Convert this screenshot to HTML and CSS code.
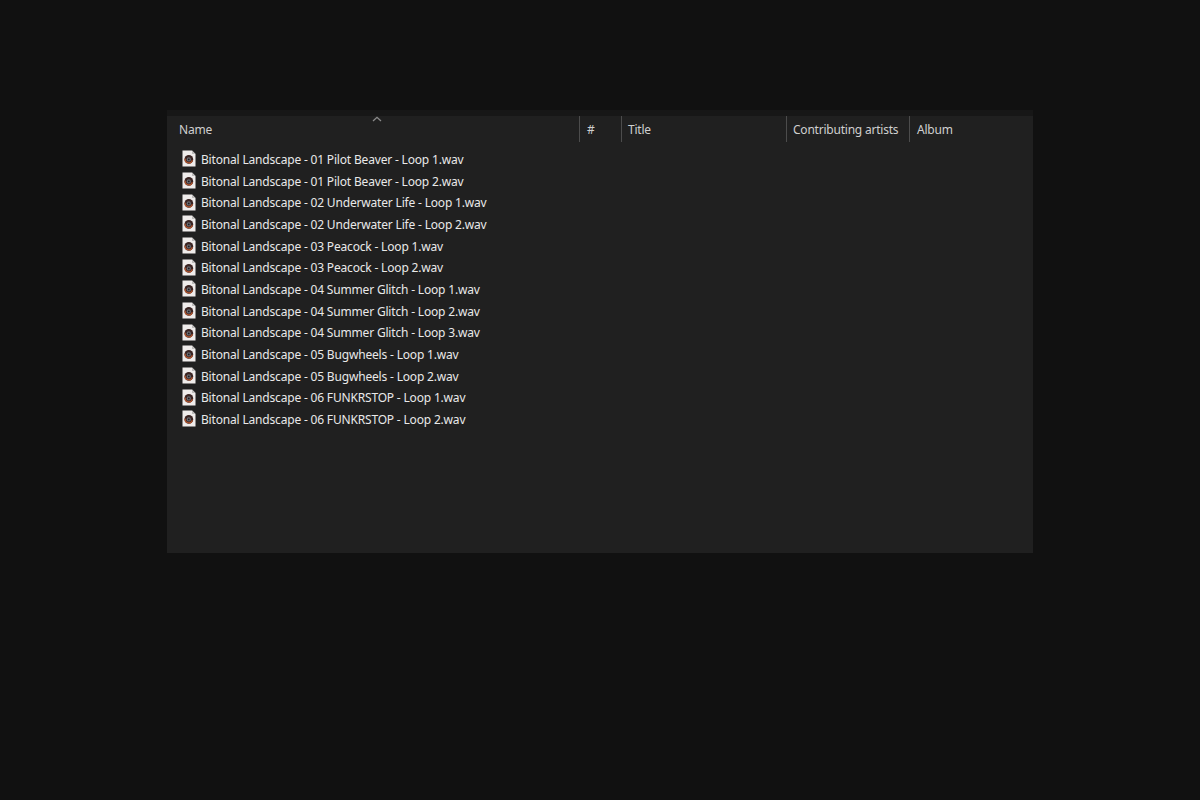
FILE: index.html
```html
<!DOCTYPE html>
<html lang="en">
<head>
<meta charset="utf-8">
<title>Bitonal Landscape</title>
<link rel="stylesheet" href="styles.css">
</head>
<body>
<svg class="defs" width="0" height="0" aria-hidden="true">
  <symbol id="wav" viewBox="0 0 14 17">
    <path d="M0.5 0.5H10L13.5 4V16.5H0.5Z" fill="#efeceb"/>
    <path d="M10 0.5V4H13.5" fill="#bdbbba"/>
    <circle cx="6.8" cy="9.4" r="4.4" fill="#3a2422"/>
    <path d="M3.2 8.6A3.7 3.7 0 0 0 10.4 10.2" fill="none" stroke="#b3562f" stroke-width="1.2"/>
    <circle cx="6.8" cy="9.4" r="2.2" fill="#6a6a70"/>
    <circle cx="6.8" cy="9.4" r="0.9" fill="#1d1d20"/>
  </symbol>
</svg>
<main class="window">
  <div class="strip"></div>
  <header class="head">
    <div class="col col-name"><span class="label">Name</span><svg class="sort" viewBox="0 0 10 6"><path d="M1 5L5 1.3L9 5" fill="none" stroke="#8b8b8b" stroke-width="1.3"/></svg></div>
    <div class="col col-num"><span class="label">#</span></div>
    <div class="col col-title"><span class="label">Title</span></div>
    <div class="col col-artist"><span class="label">Contributing artists</span></div>
    <div class="col col-album"><span class="label">Album</span></div>
  </header>
  <ul class="files">
    <li class="file"><svg class="icon"><use href="#wav"/></svg><span class="name">Bitonal Landscape - 01 Pilot Beaver - Loop 1.wav</span></li>
    <li class="file"><svg class="icon"><use href="#wav"/></svg><span class="name">Bitonal Landscape - 01 Pilot Beaver - Loop 2.wav</span></li>
    <li class="file"><svg class="icon"><use href="#wav"/></svg><span class="name">Bitonal Landscape - 02 Underwater Life - Loop 1.wav</span></li>
    <li class="file"><svg class="icon"><use href="#wav"/></svg><span class="name">Bitonal Landscape - 02 Underwater Life - Loop 2.wav</span></li>
    <li class="file"><svg class="icon"><use href="#wav"/></svg><span class="name">Bitonal Landscape - 03 Peacock - Loop 1.wav</span></li>
    <li class="file"><svg class="icon"><use href="#wav"/></svg><span class="name">Bitonal Landscape - 03 Peacock - Loop 2.wav</span></li>
    <li class="file"><svg class="icon"><use href="#wav"/></svg><span class="name">Bitonal Landscape - 04 Summer Glitch - Loop 1.wav</span></li>
    <li class="file"><svg class="icon"><use href="#wav"/></svg><span class="name">Bitonal Landscape - 04 Summer Glitch - Loop 2.wav</span></li>
    <li class="file"><svg class="icon"><use href="#wav"/></svg><span class="name">Bitonal Landscape - 04 Summer Glitch - Loop 3.wav</span></li>
    <li class="file"><svg class="icon"><use href="#wav"/></svg><span class="name">Bitonal Landscape - 05 Bugwheels - Loop 1.wav</span></li>
    <li class="file"><svg class="icon"><use href="#wav"/></svg><span class="name">Bitonal Landscape - 05 Bugwheels - Loop 2.wav</span></li>
    <li class="file"><svg class="icon"><use href="#wav"/></svg><span class="name">Bitonal Landscape - 06 FUNKRSTOP - Loop 1.wav</span></li>
    <li class="file"><svg class="icon"><use href="#wav"/></svg><span class="name">Bitonal Landscape - 06 FUNKRSTOP - Loop 2.wav</span></li>
  </ul>
</main>
</body>
</html>
```

FILE: styles.css
```css
html, body {
  margin: 0;
  height: 100%;
  background: #111111;
}
body {
  padding: 110px 167px 0;
  box-sizing: border-box;
  height: 800px;
  overflow: hidden;
  font-family: "Noto Sans", "Open Sans", sans-serif;
  font-size: 12px;
}
.defs { display: block; height: 0; }
.window {
  width: 866px;
  height: 443px;
  background: #202020;
  overflow: hidden;
}
.strip { height: 6px; background: #171717; }
.head {
  display: flex;
  height: 26px;
  color: #cfcfcf;
  letter-spacing: -0.22px;
}
.col {
  position: relative;
  box-sizing: border-box;
  height: 26px;
  border-left: 1px solid #4c4c4c;
  white-space: nowrap;
}
.label {
  display: block;
  line-height: 28px;
}
.col-name { width: 412px; padding-left: 12px; border-left: 0; }
.col-num { width: 42px; padding-left: 7px; }
.col-title { width: 165px; padding-left: 6px; }
.col-artist { width: 123px; padding-left: 6px; }
.col-album { width: 124px; padding-left: 7px; }
.sort {
  position: absolute;
  left: 205px;
  top: 0;
  width: 10px;
  height: 6px;
}
.files {
  list-style: none;
  margin: 0;
  padding: 6px 0 0 15px;
}
.file {
  display: flex;
  align-items: center;
  height: 21.67px;
  color: #e9e9e9;
  letter-spacing: -0.18px;
  white-space: nowrap;
}
.name {
  padding-top: 1.5px;
}
.icon {
  width: 14px;
  height: 17px;
  margin-right: 5px;
  flex: none;
}
```
